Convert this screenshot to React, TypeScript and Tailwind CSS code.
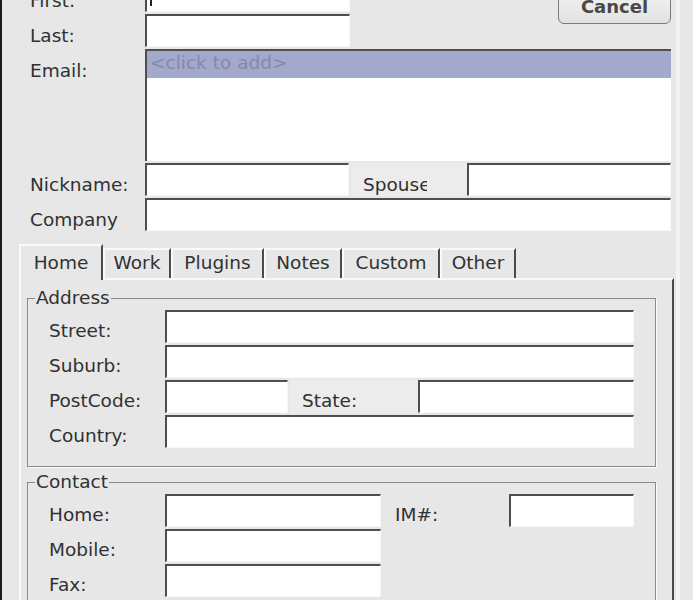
import React from 'react';

const font = { fontFamily: '"DejaVu Sans", "Liberation Sans", sans-serif' };

type FieldProps = { className?: string; cursor?: boolean };

function Field({ className = '', cursor = false }: FieldProps) {
  return (
    <div
      className={`h-[33px] shrink-0 bg-white border-t-2 border-l-2 border-r border-b border-t-[#4e4e4e] border-l-[#4e4e4e] border-r-[#f7f7f7] border-b-[#f7f7f7] ${className}`}
    >
      {cursor && <div className="ml-[3px] mt-[6px] w-[2px] h-[19px] bg-[#222]" />}
    </div>
  );
}

function Label({ text, className = '' }: { text: string; className?: string }) {
  return <div className={`shrink-0 leading-[22px] whitespace-nowrap ${className}`}>{text}</div>;
}

// grey static label cell that sits between two entries
function Cell({ text, className = '', clip = '' }: { text: string; className?: string; clip?: string }) {
  return (
    <div className={`h-[33px] shrink-0 bg-[#ececec] leading-[22px] ${className}`}>
      <div className={`overflow-hidden whitespace-nowrap ${clip}`}>{text}</div>
    </div>
  );
}

const tabs = [
  { name: 'Home', w: 'w-[84px]' },
  { name: 'Work', w: 'w-[68px]' },
  { name: 'Plugins', w: 'w-[93px]' },
  { name: 'Notes', w: 'w-[78px]' },
  { name: 'Custom', w: 'w-[98px]' },
  { name: 'Other', w: 'w-[76px]' },
];

function Group({ title, children }: { title: string; children: React.ReactNode }) {
  return (
    <fieldset className="border border-[#8c8c8c] shadow-[1px_1px_0_#fbfbfb]">
      <legend className="ml-[7px] px-[1px] leading-[22px]">{title}</legend>
      <div className="flex flex-col gap-[2px] px-[21px] pt-[1px] pb-[18px]">{children}</div>
    </fieldset>
  );
}

export default function App() {
  return (
    <div
      className="flex h-[600px] w-[693px] overflow-hidden bg-[#e7e7e7] text-[18.5px] text-[#313131] border-l-2 border-l-[#1c1c1c]"
      style={font}
    >
      <div className="w-[674px] shrink-0">
        {/* name / email block */}
        <div className="-mt-[21px] pl-[28px] pr-[5px] flex flex-col gap-[2px]">
          <div className="flex">
            <div className="flex flex-col gap-[2px]">
              <div className="flex h-[33px]">
                <Label text="First:" className="w-[115px] pt-[11px]" />
                <Field className="w-[205px]" cursor />
              </div>
              <div className="flex h-[33px]">
                <Label text="Last:" className="w-[115px] pt-[11px]" />
                <Field className="w-[205px]" />
              </div>
            </div>
            <button className="ml-auto mt-[5px] h-[40px] w-[113px] rounded-[6px] border border-[#7a7a7a] bg-gradient-to-b from-[#f6f6f6] to-[#e2e2e2] flex items-end justify-center pb-[5px] font-bold text-[18px] leading-[22px] text-[#484848]">
              Cancel
            </button>
          </div>

          <div className="flex h-[112px]">
            <Label text="Email:" className="w-[115px] pt-[11px]" />
            <div className="w-[526px] h-[112px] bg-white border-t-2 border-l-2 border-t-[#4e4e4e] border-l-[#4e4e4e]">
              <div className="h-[27px] bg-[#a3a8cd] pl-[3px] pt-[1px] leading-[22px] text-[#8589a9]">&lt;click to add&gt;</div>
            </div>
          </div>

          <div className="flex h-[33px]">
            <Label text="Nickname:" className="w-[115px] pt-[11px]" />
            <Field className="w-[204px]" />
            <Cell text="Spouse" className="ml-[2px] w-[116px] pl-[12px] pt-[11px]" clip="w-[64px]" />
            <Field className="w-[204px]" />
          </div>

          <div className="flex h-[33px]">
            <Label text="Company" className="w-[115px] pt-[11px]" />
            <Field className="flex-1" />
          </div>
        </div>

        {/* notebook tabs */}
        <div className="mt-[13px] ml-[17px] flex items-start h-[34px] relative z-10">
          {tabs.map((t, i) =>
            i === 0 ? (
              <div
                key={t.name}
                className={`${t.w} h-[36px] shrink-0 bg-[#e7e7e7] border-t-2 border-l-2 border-r-2 border-t-[#fafafa] border-l-[#fafafa] border-r-[#4a4a4a] text-center pt-[6px] leading-[22px]`}
              >
                {t.name}
              </div>
            ) : (
              <div
                key={t.name}
                className={`${t.w} h-[30px] mt-[4px] shrink-0 border-t-2 border-l-2 border-r-2 border-t-[#fafafa] border-l-[#fafafa] border-r-[#4a4a4a] text-center pt-[2px] leading-[22px]`}
              >
                {t.name}
              </div>
            )
          )}
        </div>

        {/* Home page */}
        <div className="ml-[17px] mr-[2px] h-[400px] border-t-2 border-l-2 border-r-2 border-t-[#fafafa] border-l-[#fafafa] border-r-[#4a4a4a] pt-[7px] pl-[6px] pr-[16px]">
          <Group title="Address">
            <div className="flex h-[33px]">
              <Label text="Street:" className="w-[116px] pt-[10px]" />
              <Field className="flex-1" />
            </div>
            <div className="flex h-[33px]">
              <Label text="Suburb:" className="w-[116px] pt-[10px]" />
              <Field className="flex-1" />
            </div>
            <div className="flex h-[33px]">
              <Label text="PostCode:" className="w-[116px] pt-[10px]" />
              <Field className="w-[123px]" />
              <Cell text="State:" className="ml-[2px] w-[128px] pl-[12px] pt-[10px]" />
              <Field className="flex-1" />
            </div>
            <div className="flex h-[33px]">
              <Label text="Country:" className="w-[116px] pt-[10px]" />
              <Field className="flex-1" />
            </div>
          </Group>

          <div className="mt-[4px]">
            <Group title="Contact">
              <div className="flex h-[33px]">
                <Label text="Home:" className="w-[116px] pt-[10px]" />
                <Field className="w-[216px]" />
                <Label text="IM#:" className="w-[128px] pl-[14px] pt-[10px]" />
                <Field className="w-[125px]" />
              </div>
              <div className="flex h-[33px]">
                <Label text="Mobile:" className="w-[116px] pt-[10px]" />
                <Field className="w-[216px]" />
              </div>
              <div className="flex h-[33px]">
                <Label text="Fax:" className="w-[116px] pt-[10px]" />
                <Field className="w-[216px]" />
              </div>
            </Group>
          </div>
        </div>
      </div>
      <div className="w-[4px] shrink-0 bg-[#f3f3f3]" />
    </div>
  );
}
